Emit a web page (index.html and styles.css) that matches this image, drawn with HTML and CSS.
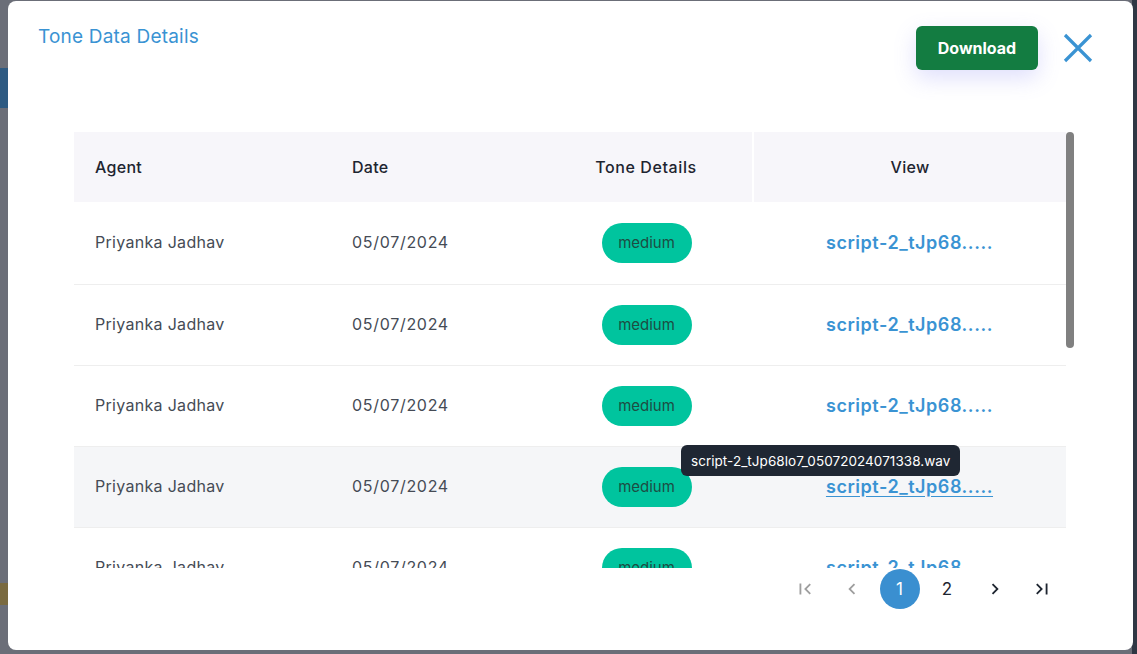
FILE: index.html
```html
<!DOCTYPE html>
<html lang="en">
<head>
<meta charset="utf-8">
<title>Tone Data Details</title>
<link rel="stylesheet" href="styles.css">
</head>
<body>
<div class="modal">
  <div class="modal-head">
    <h2 class="title">Tone Data Details</h2>
    <div class="actions">
      <button class="btn-download">Download</button>
      <button class="btn-close" aria-label="Close">
        <svg width="32" height="32" viewBox="0 0 32 32"><path d="M3 3L29 29M29 3L3 29" stroke="#3a93d3" stroke-width="3.2" fill="none"/></svg>
      </button>
    </div>
  </div>

  <div class="table-box">
    <div class="table-wrap">
      <table class="grid">
        <thead>
          <tr>
            <th class="c-agent">Agent</th>
            <th class="c-date">Date</th>
            <th class="c-tone">Tone Details</th>
            <th class="c-view">View</th>
          </tr>
        </thead>
        <tbody>
          <tr><td class="c-agent">Priyanka Jadhav</td><td class="c-date">05/07/2024</td><td class="c-tone"><span class="badge">medium</span></td><td class="c-view"><a class="file">script-2_tJp68.....</a></td></tr>
          <tr><td class="c-agent">Priyanka Jadhav</td><td class="c-date">05/07/2024</td><td class="c-tone"><span class="badge">medium</span></td><td class="c-view"><a class="file">script-2_tJp68.....</a></td></tr>
          <tr><td class="c-agent">Priyanka Jadhav</td><td class="c-date">05/07/2024</td><td class="c-tone"><span class="badge">medium</span></td><td class="c-view"><a class="file">script-2_tJp68.....</a></td></tr>
          <tr class="hover"><td class="c-agent">Priyanka Jadhav</td><td class="c-date">05/07/2024</td><td class="c-tone"><span class="badge">medium</span></td><td class="c-view"><div class="tip-anchor"><span class="tooltip">script-2_tJp68lo7_05072024071338.wav</span><a class="file">script-2_tJp68.....</a></div></td></tr>
          <tr><td class="c-agent">Priyanka Jadhav</td><td class="c-date">05/07/2024</td><td class="c-tone"><span class="badge">medium</span></td><td class="c-view"><a class="file">script-2_tJp68.....</a></td></tr>
          <tr><td class="c-agent">Priyanka Jadhav</td><td class="c-date">05/07/2024</td><td class="c-tone"><span class="badge">medium</span></td><td class="c-view"><a class="file">script-2_tJp68.....</a></td></tr>
          <tr><td class="c-agent">Priyanka Jadhav</td><td class="c-date">05/07/2024</td><td class="c-tone"><span class="badge">medium</span></td><td class="c-view"><a class="file">script-2_tJp68.....</a></td></tr>
          <tr><td class="c-agent">Priyanka Jadhav</td><td class="c-date">05/07/2024</td><td class="c-tone"><span class="badge">medium</span></td><td class="c-view"><a class="file">script-2_tJp68.....</a></td></tr>
          <tr><td class="c-agent">Priyanka Jadhav</td><td class="c-date">05/07/2024</td><td class="c-tone"><span class="badge">medium</span></td><td class="c-view"><a class="file">script-2_tJp68.....</a></td></tr>
          <tr><td class="c-agent">Priyanka Jadhav</td><td class="c-date">05/07/2024</td><td class="c-tone"><span class="badge">medium</span></td><td class="c-view"><a class="file">script-2_tJp68.....</a></td></tr>
        </tbody>
      </table>
    </div>
    <div class="scroll-thumb"></div>
  </div>

  <nav class="pager">
    <button class="pg disabled" aria-label="First page"><svg width="22" height="22" viewBox="0 0 24 24"><path d="M18.41 16.59L13.82 12l4.59-4.59L17 6l-6 6 6 6zM6 6h2v12H6z" fill="currentColor"/></svg></button>
    <button class="pg disabled" aria-label="Previous page"><svg width="22" height="22" viewBox="0 0 24 24"><path d="M15.41 7.41L14 6l-6 6 6 6 1.41-1.41L10.83 12z" fill="currentColor"/></svg></button>
    <button class="pg current">1</button>
    <button class="pg">2</button>
    <button class="pg" aria-label="Next page"><svg width="22" height="22" viewBox="0 0 24 24"><path d="M10 6L8.59 7.41 13.17 12l-4.58 4.59L10 18l6-6z" fill="currentColor"/></svg></button>
    <button class="pg" aria-label="Last page"><svg width="22" height="22" viewBox="0 0 24 24"><path d="M5.59 7.41L10.18 12l-4.59 4.59L7 18l6-6-6-6zM16 6h2v12h-2z" fill="currentColor"/></svg></button>
  </nav>
</div>
</body>
</html>
```

FILE: styles.css
```css
* { box-sizing: border-box; }

html, body { height: 100%; }

body {
  margin: 0;
  padding: 1px 4px 4px 8px;
  font-family: "Inter", "Noto Sans", "Liberation Sans", sans-serif;
  background:
    linear-gradient(to bottom, transparent 68px, #2e5a82 68px, #2e5a82 108px, transparent 108px, transparent 583px, #7a6a40 583px, #7a6a40 605px, transparent 605px) left top / 8px 100% no-repeat,
    linear-gradient(#2f3744, #2f3744) right top / 5px 100% no-repeat,
    #6b6e78;
  overflow: hidden;
}

.modal {
  width: 1125px;
  height: 649px;
  background: #ffffff;
  border-radius: 8px;
  padding: 0 0 0 30px;
  display: flex;
  flex-direction: column;
}

.modal-head {
  display: flex;
  justify-content: space-between;
  align-items: flex-start;
  height: 131px;
}

.title {
  margin: 24px 0 0 0;
  font-size: 19px;
  font-weight: 400;
  color: #3a93d3;
  letter-spacing: 0.2px;
}

.actions {
  display: flex;
  align-items: center;
  gap: 24px;
  margin: 25px 39px 0 0;
}

.btn-download {
  width: 122px;
  height: 44px;
  border: none;
  border-radius: 6px;
  background: #137c41;
  color: #ffffff;
  font-family: inherit;
  font-size: 16px;
  font-weight: 700;
  box-shadow: 0 8px 22px rgba(110, 110, 240, 0.22);
}

.btn-close {
  border: none;
  background: none;
  padding: 0;
  width: 32px;
  height: 32px;
  display: flex;
}

.table-box {
  position: relative;
  margin-left: 36px;
  width: 1000px;
  height: 436px;
}

.table-wrap {
  width: 992px;
  height: 436px;
  overflow: hidden;
}

.scroll-thumb {
  position: absolute;
  right: 0;
  top: 0;
  width: 8px;
  height: 216px;
  border-radius: 4px;
  background: #808080;
}

.grid {
  width: 992px;
  border-collapse: collapse;
  table-layout: fixed;
}

.grid th {
  height: 70px;
  background: #f7f6fa;
  font-size: 16px;
  font-weight: 500;
  color: #1e2530;
  text-align: left;
  padding: 0 0 1px 21px;
  letter-spacing: 0.3px;
}

.grid th.c-tone { border-right: 2px solid #ffffff; letter-spacing: 0.6px; }

.grid td {
  height: 81px;
  font-size: 16px;
  color: #454b55;
  padding: 0 0 1px 21px;
  border-top: 1px solid #eeeeee;
  letter-spacing: 0.3px;
}

.grid td.c-date { letter-spacing: 0.7px; }

.grid tbody tr:first-child td { border-top: none; }
.grid tbody tr:first-child td { height: 82px; }

.grid tr.hover td { background: #f5f6f8; }

.c-agent { width: 257px; }
.c-date { width: 209px; }
.c-tone { width: 213px; }
.grid th.c-tone, .grid td.c-tone,
.grid th.c-view, .grid td.c-view { text-align: center; padding: 0; }

.badge {
  display: inline-flex;
  align-items: center;
  justify-content: center;
  width: 90px;
  height: 40px;
  border-radius: 20px;
  background: #00c49e;
  color: #1d4d43;
  font-size: 15px;
  letter-spacing: 0;
}

.file {
  color: #3a93d3;
  font-size: 18px;
  font-weight: 600;
  letter-spacing: 0.55px;
  cursor: pointer;
}

.hover .file { text-decoration: underline; text-underline-offset: 3px; }

.tip-anchor {
  position: relative;
  display: inline-block;
}

.tooltip {
  position: absolute;
  left: -145px;
  top: -31px;
  height: 31px;
  padding: 0 10px;
  background: #1f2733;
  color: #ffffff;
  font-size: 13.5px;
  font-weight: 400;
  letter-spacing: 0.05px;
  border-radius: 6px;
  white-space: nowrap;
  display: flex;
  align-items: center;
}

.pager {
  display: flex;
  justify-content: flex-end;
  gap: 7.5px;
  width: 1000px;
  margin: 1px 0 0 36px;
  padding-right: 12px;
}

.pg {
  width: 40px;
  height: 40px;
  border: none;
  border-radius: 50%;
  background: none;
  padding: 0;
  display: flex;
  align-items: center;
  justify-content: center;
  font-family: inherit;
  font-size: 17px;
  color: #1e2530;
}

.pg.disabled { color: #9e9e9e; }

.pg.current { background: #3a8fd0; color: #ffffff; }
```
